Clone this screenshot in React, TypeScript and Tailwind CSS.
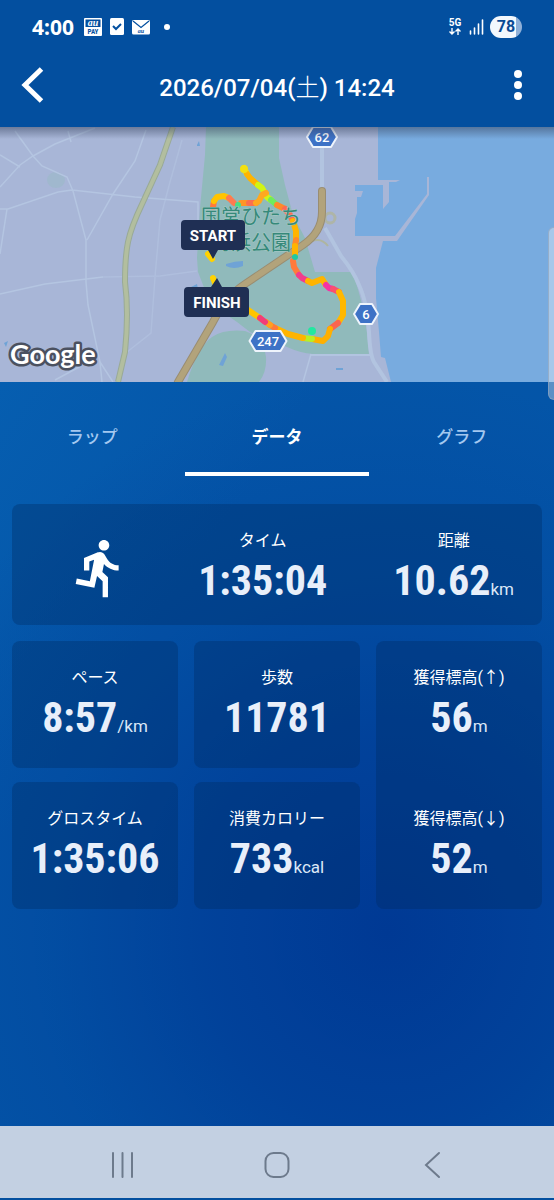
import clsx from 'clsx';
import React, { useState } from 'react';
import { MdDirectionsRun } from 'react-icons/md';

const TABS = ['ラップ', 'データ', 'グラフ'] as const;

type StatProps = {
  label: string;
  value: string;
  unit?: string;
};

const Stat = ({ label, value, unit }: StatProps) => (
  <dl className="flex flex-col items-center gap-1.5 whitespace-nowrap">
    <dt className="text-base leading-5">{label}</dt>
    <dd className="flex items-baseline">
      <span className="font-['Roboto_Condensed','Liberation_Sans_Narrow','Roboto',sans-serif] text-[42px] leading-[48px] font-bold text-[#e8effa]">
        {value}
      </span>
      {unit && <span className="text-[17px] leading-5 text-[#dbe7f7]">{unit}</span>}
    </dd>
  </dl>
);

const StatusBar = () => (
  <div className="flex items-center justify-between pt-4 pr-8 pl-8">
    <div className="flex items-center">
      <span className="font-['Noto_Sans',sans-serif] text-[21px] leading-[22px] font-bold">4:00</span>
      {/* 通知アイコン */}
      <svg className="ml-2.5 h-[18px] w-[18px]" viewBox="0 0 18 18">
        <rect width="18" height="18" rx="1" fill="#fff" />
        <rect x="1.5" y="1.5" width="15" height="7.5" fill="#034f9f" />
        <text x="9" y="8" textAnchor="middle" fontSize="10" fontWeight="700" fontStyle="italic" fontFamily="Liberation Serif, serif" fill="#fff">
          au
        </text>
        <text x="9" y="16" textAnchor="middle" fontSize="7" fontWeight="700" fontFamily="Roboto Condensed, Roboto, sans-serif" fill="#034f9f">
          PAY
        </text>
      </svg>
      <svg className="ml-2 h-[18px] w-[14px]" viewBox="0 0 14 18">
        <rect width="14" height="17" rx="1.5" fill="#fff" />
        <path d="M3 8l3 3 5-5" fill="none" stroke="#034f9f" strokeWidth="2" />
      </svg>
      <svg className="ml-2 h-[18px] w-[18px]" viewBox="0 0 18 18">
        <rect y="2" width="18" height="14.5" rx="1.5" fill="#fff" />
        <path d="M1 3l8 6.5L17 3" fill="none" stroke="#034f9f" strokeWidth="1.2" />
        <text x="9" y="15" textAnchor="middle" fontSize="6" fontWeight="700" fontStyle="italic" fontFamily="Liberation Serif, serif" fill="#034f9f">
          au
        </text>
      </svg>
      <span className="ml-[14px] h-1.5 w-1.5 rounded-full bg-white" />
    </div>
    <div className="flex items-center">
      <svg className="h-[18px] w-[14px]" viewBox="0 0 14 18" fill="#fff">
        <text x="7" y="8" textAnchor="middle" fontSize="10" fontWeight="700" fontFamily="Roboto, sans-serif">
          5G
        </text>
        <path d="M4 10v6M1.5 13.5L4 16l2.5-2.5M10 17v-6M7.5 13.5L10 11l2.5 2.5" fill="none" stroke="#fff" strokeWidth="1.4" />
      </svg>
      <svg className="ml-[7px] h-4 w-[15px]" viewBox="0 0 15 16">
        <path d="M1.5 12v3M5.5 9v6M9.5 5v10M13.5 1v14" stroke="#fff" strokeWidth="1.6" strokeLinecap="round" />
      </svg>
      <span className="ml-[6px] flex h-[22px] w-8 items-center justify-center rounded-full bg-linear-to-r from-[#f3f8fd] from-80% to-[#8fb0d8] to-80% text-base font-bold text-[#0a4a94]">
        78
      </span>
    </div>
  </div>
);

type ShieldProps = {
  x: number;
  y: number;
  w: number;
  no: string;
};

const Shield = ({ x, y, w, no }: ShieldProps) => (
  <g transform={`translate(${x} ${y})`}>
    <path
      d={`M${-w / 2} 0L${-w / 2 + 6} -10H${w / 2 - 6}L${w / 2} 0L${w / 2 - 6} 10H${-w / 2 + 6}Z`}
      fill="#3d72c6"
      stroke="#eef4fc"
      strokeWidth="2"
      strokeLinejoin="round"
    />
    <text y="5" textAnchor="middle" fontSize="13" fontWeight="500" fill="#fff">
      {no}
    </text>
  </g>
);

// 速度ごとに色分けした区間
const ROUTE = [
  { d: 'M244 41L247 47', color: '#f2e010' },
  { d: 'M247 47L250 51L258 58', color: '#ffb400' },
  { d: 'M258 58L262 61L267 70L271 73', color: '#d2f414' },
  { d: 'M271 73L277 78', color: '#6fec5c' },
  { d: 'M277 78L285 82', color: '#ff8a2a' },
  { d: 'M285 82L290 88L293 94', color: '#ff6a50' },
  { d: 'M293 94L296 104L296 113', color: '#ffb400' },
  { d: 'M296 113L295 119', color: '#ff8a2a' },
  { d: 'M295 119L295 127', color: '#ffb400' },
  { d: 'M293 134L294 140L299 148', color: '#ff7a3c' },
  { d: 'M299 148L302 151L308 154', color: '#f23c8c' },
  { d: 'M308 154L312 156L322 152L326 158', color: '#ffb400' },
  { d: 'M326 158L329 161L333 162', color: '#f534a4' },
  { d: 'M333 162L339 165', color: '#fa506e' },
  { d: 'M339 165L343 174L343 188L338 196', color: '#ffb800' },
  { d: 'M338 196L330 202', color: '#fa6450' },
  { d: 'M330 202L328 209L323 214L312 212', color: '#ffb000' },
  { d: 'M312 212L303 211', color: '#b8f024' },
  { d: 'M303 211L288 207L275 201', color: '#ffb400' },
  { d: 'M275 201L270 198', color: '#ff7a3c' },
  { d: 'M270 198L266 195', color: '#ffa020' },
  { d: 'M260 191L248 183', color: '#ffc400' },
  { d: 'M265 195L260 191', color: '#f23c78' },
  { d: 'M213 80L214 74', color: '#ff7a3c' },
  { d: 'M214 74L217 70L224 69L229 71', color: '#ffc400' },
  { d: 'M229 71L234 76', color: '#ff7a50' },
  { d: 'M241 76L249 76', color: '#ff9628' },
  { d: 'M249 76L256 76', color: '#fa7050' },
  { d: 'M256 76L259 74L262 68L266 66', color: '#ffa820' },
  { d: 'M208 127L212 132', color: '#ffd200' },
  { d: 'M213 151L216 158', color: '#ffd200' },
];

const CourseMap = () => (
  <svg className="block w-full" viewBox="0 0 554 255" fontFamily="Roboto, 'Noto Sans CJK JP', sans-serif">
    <defs>
      <linearGradient id="shade" x1="0" y1="0" x2="0" y2="1">
        <stop offset="0" stopColor="#33405c" stopOpacity=".5" />
        <stop offset="1" stopColor="#33405c" stopOpacity="0" />
      </linearGradient>
    </defs>
    <rect width="554" height="255" fill="#a8b6d7" />

    {/* 海と港 */}
    <path d="M378 0H554V255H391L385 231L381 230L379 205L376 171V141L383 114H355V58H378Z" fill="#78abdf" />
    <path d="M378 53H400L396 55H389V75L383 82V58H355V53ZM355 64H363L361 70H357V86L355 92ZM355 109H395L427 67V50H429V68L397 114H355Z" fill="#a8b6d7" />

    {/* 公園 */}
    <path
      d="M206 0L205 28L200 81L197 131L198 145L203 158L212 178L237 195L250 205L287 220Q300 226 313 227L369 228Q366 180 352 145H315L305 111L293 88L285 58L279 31V0ZM187 255Q197 221 212 210Q224 202 245 204Q264 210 266 230Q267 245 259 255Z"
      fill="#90babb"
    />
    <ellipse cx="56" cy="53" rx="9" ry="8" fill="#a0b8ce" />
    <path d="M226 137Q235 134 243 134V139Q234 143 226 139ZM219 238L225 226L227 230L223 239ZM191 160L197 157L198 162H190ZM336 241H343V243H336ZM197 18L199 14L200 19H197ZM4 216L8 214L6 220Z" fill="#6fa3d6" />

    {/* 細い道 */}
    <g fill="none" stroke="#b4c5e1" strokeWidth="1.5">
      <path d="M15 4L33 29L42 39L67 50L73 64L86 113V155L88 178L100 235L102 255M0 60L20 38L33 29L55 17L95 1M68 4L71 15M0 28L20 40M0 82H8L58 65L72 63L135 70L198 75V105M7 82L0 127M146 3L135 34L113 67L87 113M0 167L45 157L103 150M100 235L113 255M55 253L81 239M303 255L311 227" />
      <path d="M182 13L170 55L160 93L155 150L151 206L127 225M103 150L160 149L197 144" opacity=".55" />
    </g>

    {/* 幹線道路 */}
    <path d="M173 0L160 38L143 75Q131 100 128 115Q125 130 125 155Q129 185 125 225L118 255" fill="none" stroke="#99aa97" strokeWidth="6" />
    <path d="M173 0L160 38L143 75Q131 100 128 115Q125 130 125 155Q129 185 125 225L118 255" fill="none" stroke="#b2be9f" strokeWidth="4" />
    <circle cx="330" cy="91" r="5" fill="none" stroke="#aeb5a8" strokeWidth="3" />
    <path d="M306 117Q320 108 328 119" fill="none" stroke="#aeb59f" strokeWidth="2" />
    <path d="M322 20V65M325 101L341 129Q354 145 359 158Q367 175 369 205Q370 228 374 235L387 255" fill="none" stroke="#b2c4e0" strokeWidth="4" />
    <path d="M311 228H371" stroke="#b2c4e0" strokeWidth="2" />
    <path d="M178 255L213 195Q225 170 245 157L303 118Q322 105 322 85V64" fill="none" stroke="#998d72" strokeWidth="8" strokeLinecap="round" />
    <path d="M178 255L213 195Q225 170 245 157L303 118Q322 105 322 85V64" fill="none" stroke="#b2a37b" strokeWidth="6" strokeLinecap="round" />

    {/* 走行ルート */}
    <g fill="none" strokeWidth="6" strokeLinecap="round" strokeLinejoin="round">
      {ROUTE.map(({ d, color }) => (
        <path key={d} d={d} stroke={color} />
      ))}
    </g>
    <circle cx="244" cy="42" r="4" fill="#f2e010" />
    <circle cx="295" cy="130" r="3" fill="#22c8a0" />
    <circle cx="238" cy="78" r="3" fill="#48e088" />
    <circle cx="312" cy="204" r="4" fill="#22e8a0" />

    <g textAnchor="middle" fontSize="20" fill="#36897a" stroke="#a9cac6" strokeWidth="1" paintOrder="stroke">
      <text x="251" y="97">国営ひたち</text>
      <text x="251" y="123">海浜公園</text>
    </g>

    <Shield x={322} y={10} w={30} no="62" />
    <Shield x={366} y={187} w={24} no="6" />
    <Shield x={268} y={214} w={37} no="247" />

    {/* スタート・ゴールの吹き出し */}
    <g textAnchor="middle" fontSize="15" fontWeight="700">
      <path d="M185 93H241Q245 93 245 97V119Q245 123 241 123H218L213 132L208 123H185Q181 123 181 119V97Q181 93 185 93Z" fill="#1f2f54" />
      <text x="213" y="114" fill="#fff">START</text>
      <path d="M188 160H211L217 151L222 160H245Q249 160 249 164V186Q249 190 245 190H188Q184 190 184 186V164Q184 160 188 160Z" fill="#1f2f54" />
      <text x="217" y="181" fill="#fff">FINISH</text>
    </g>

    <text x="10" y="237" fontSize="27" fontWeight="700" fontFamily="Lato, sans-serif" fill="#fff" stroke="#4b5160" strokeWidth="5" strokeLinejoin="round" paintOrder="stroke">
      Google
    </text>
    <rect width="554" height="12" fill="url(#shade)" />
  </svg>
);

const App = () => {
  const [tab, setTab] = useState<(typeof TABS)[number]>('データ');

  return (
    <div className="relative flex min-h-screen flex-col bg-[#034f9f] pb-0.5 font-['Roboto','Noto_Sans_CJK_JP',sans-serif] text-white">
      <header className="pb-4">
        <StatusBar />
        <div className="flex items-center justify-between pt-[27px] pr-6 pl-5">
          <button type="button" aria-label="戻る">
            <svg className="h-[46px] w-7" viewBox="0 0 28 46" fill="none" stroke="#fff" strokeWidth="5">
              <path d="M21.5 4L5 20l16.5 16" />
            </svg>
          </button>
          <h1 className="text-2xl leading-8 font-medium">
            2026/07/04(<span className="font-light">土</span>) 14:24
          </h1>
          <button type="button" aria-label="メニュー" className="flex w-6 flex-col items-center gap-[3px] pb-1.5">
            <span className="h-2 w-2 rounded-full bg-white" />
            <span className="h-2 w-2 rounded-full bg-white" />
            <span className="h-2 w-2 rounded-full bg-white" />
          </button>
        </div>
      </header>

      <CourseMap />

      <main className="flex-1 bg-[radial-gradient(ellipse_95%_75%_at_70%_74%,#003994_0%,#003d97cc_35%,#00429a66_65%,transparent_100%),linear-gradient(125deg,#065eb0_0%,#0455a8_30%,#0455a7_100%)]">
        <div role="tablist" className="grid grid-cols-3">
          {TABS.map((name) => (
            <button
              key={name}
              type="button"
              role="tab"
              aria-selected={tab === name}
              className={clsx(
                'border-b-4 pt-[41px] pb-[21px] text-[17px] leading-7',
                tab === name ? 'border-white font-bold text-white' : 'border-transparent font-medium text-[#a3c8f0]'
              )}
              onClick={() => setTab(name)}
            >
              {name}
            </button>
          ))}
        </div>

        <div className="px-3 pt-7">
          <section className="flex items-center justify-between rounded-lg bg-[#002a60]/35 pt-[27px] pr-7 pb-5 pl-14">
            <MdDirectionsRun className="h-16 w-16" />
            <Stat label="タイム" value="1:35:04" />
            <Stat label="距離" value="10.62" unit="km" />
          </section>

          <div className="mt-4 grid grid-cols-3 gap-x-4 gap-y-[14px]">
            <section className="rounded-lg bg-[#002a60]/35 pt-[27px] pb-[26px]">
              <Stat label="ペース" value="8:57" unit="/km" />
            </section>
            <section className="rounded-lg bg-[#002a60]/35 pt-[27px] pb-[26px]">
              <Stat label="歩数" value="11781" />
            </section>
            <section className="row-span-2 flex flex-col justify-between rounded-lg bg-[#002a60]/35 pt-[27px] pb-[26px]">
              <Stat label="獲得標高(↑)" value="56" unit="m" />
              <Stat label="獲得標高(↓)" value="52" unit="m" />
            </section>
            <section className="rounded-lg bg-[#002a60]/35 pt-[27px] pb-[26px]">
              <Stat label="グロスタイム" value="1:35:06" />
            </section>
            <section className="rounded-lg bg-[#002a60]/35 pt-[27px] pb-[26px]">
              <Stat label="消費カロリー" value="733" unit="kcal" />
            </section>
          </div>
        </div>
      </main>

      {/* 端末のナビゲーションバー */}
      <nav className="grid h-[72px] grid-cols-3 items-center bg-[#c3d0e2] px-[45px] pt-1.5">
        <button type="button" aria-label="履歴" className="flex justify-center">
          <svg className="h-7 w-7" viewBox="0 0 28 28" fill="none" stroke="#6d7a8c" strokeWidth="2" strokeLinecap="round">
            <path d="M5 2v24M14.5 2v24M24 2v24" />
          </svg>
        </button>
        <button type="button" aria-label="ホーム" className="flex justify-center">
          <svg className="h-7 w-7" viewBox="0 0 28 28" fill="none" stroke="#6d7a8c" strokeWidth="2">
            <rect x="2.5" y="2" width="23" height="24" rx="8" />
          </svg>
        </button>
        <button type="button" aria-label="戻る" className="flex justify-center">
          <svg className="h-7 w-7" viewBox="0 0 28 28" fill="none" stroke="#6d7a8c" strokeWidth="2" strokeLinecap="round">
            <path d="M21 2L8 14l13 12" />
          </svg>
        </button>
      </nav>

      {/* エッジパネルのハンドル */}
      <div className="absolute top-[227px] right-0 h-[173px] w-1.5 rounded-l-md border border-r-0 border-[#8fa3bd]/70 bg-white/35" />
    </div>
  );
};

export default App;
